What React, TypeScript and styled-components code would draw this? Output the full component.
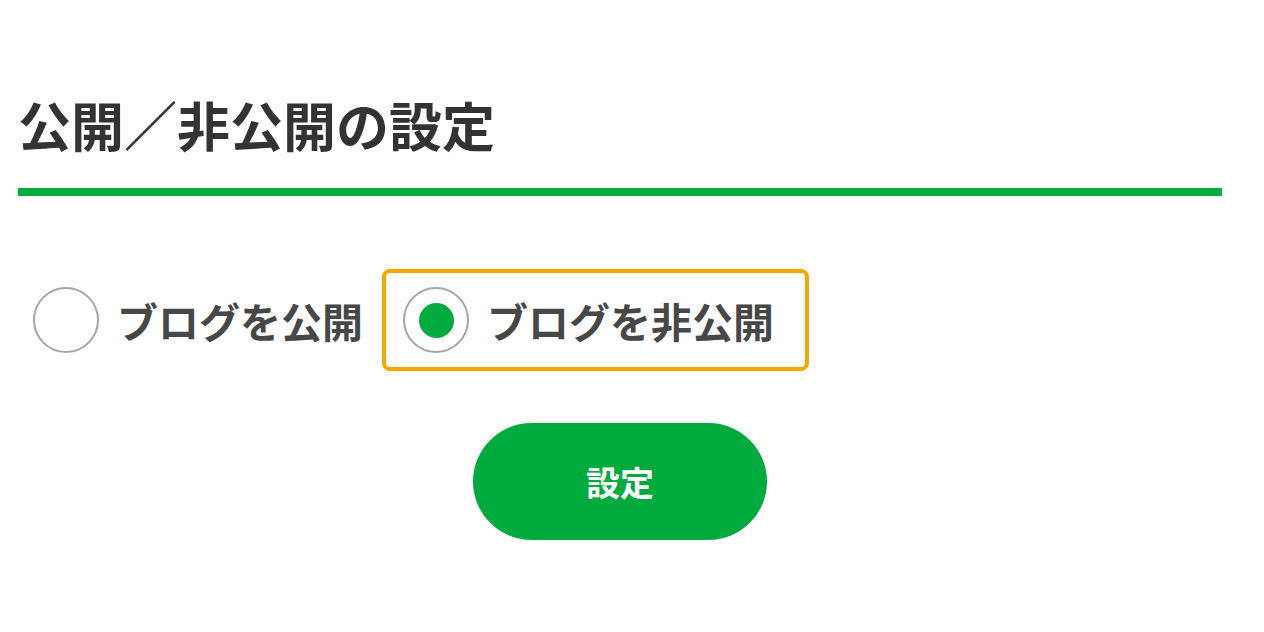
import React, { useState } from 'react';
import styled, { createGlobalStyle } from 'styled-components';

const GlobalStyle = createGlobalStyle`
  html, body {
    margin: 0;
    padding: 0;
    background: #ffffff;
  }

  body {
    font-family: 'Noto Sans CJK JP', 'Noto Sans', sans-serif;
  }
`;

const green = '#00aa3c';

const Page = styled.main`
  width: 1204px;
  padding: 98px 0 0 18px;
`;

const Heading = styled.h2`
  margin: 0;
  padding-bottom: 37px;
  border-bottom: 8px solid ${green};
  font-size: 53px;
  line-height: 1;
  font-weight: 700;
  color: #333333;
`;

const OptionRow = styled.div`
  display: flex;
  align-items: center;
  margin: 73px 0 0 -6px;
`;

const Option = styled.label<{ $active: boolean }>`
  display: flex;
  align-items: center;
  gap: 18px;
  padding: 14px 31px 14px 17px;
  border: 4px solid ${({ $active }) => ($active ? '#f7a600' : 'transparent')};
  border-radius: 8px;
  cursor: pointer;

  & + & {
    margin-left: -16px;
  }
`;

const RadioCircle = styled.span<{ $checked: boolean }>`
  display: flex;
  justify-content: center;
  align-items: center;
  box-sizing: border-box;
  width: 66px;
  height: 66px;
  border: 2px solid #a6a6a6;
  border-radius: 50%;
  background: #ffffff;

  &::after {
    content: '';
    display: ${({ $checked }) => ($checked ? 'block' : 'none')};
    width: 35px;
    height: 35px;
    border-radius: 50%;
    background: ${green};
  }
`;

const OptionText = styled.span`
  font-size: 41px;
  line-height: 1;
  font-weight: 700;
  color: #474747;
`;

const ButtonRow = styled.div`
  display: flex;
  justify-content: center;
  margin-top: 52px;
`;

const SubmitButton = styled.button`
  width: 294px;
  height: 117px;
  border: none;
  border-radius: 59px;
  background: ${green};
  color: #ffffff;
  font-family: 'Noto Sans CJK JP', 'Noto Sans', sans-serif;
  font-size: 34px;
  font-weight: 700;
  cursor: pointer;
`;

const options = [
  { value: 'public', label: 'ブログを公開' },
  { value: 'private', label: 'ブログを非公開' },
];

const App = () => {
  const [selected, setSelected] = useState('private');

  return (
    <>
      <GlobalStyle />
      <Page>
        <Heading>公開／非公開の設定</Heading>
        <OptionRow>
          {options.map((opt) => (
            <Option
              key={opt.value}
              $active={selected === opt.value}
              onClick={() => setSelected(opt.value)}
            >
              <RadioCircle $checked={selected === opt.value} />
              <OptionText>{opt.label}</OptionText>
            </Option>
          ))}
        </OptionRow>
        <ButtonRow>
          <SubmitButton>設定</SubmitButton>
        </ButtonRow>
      </Page>
    </>
  );
};

export default App;
